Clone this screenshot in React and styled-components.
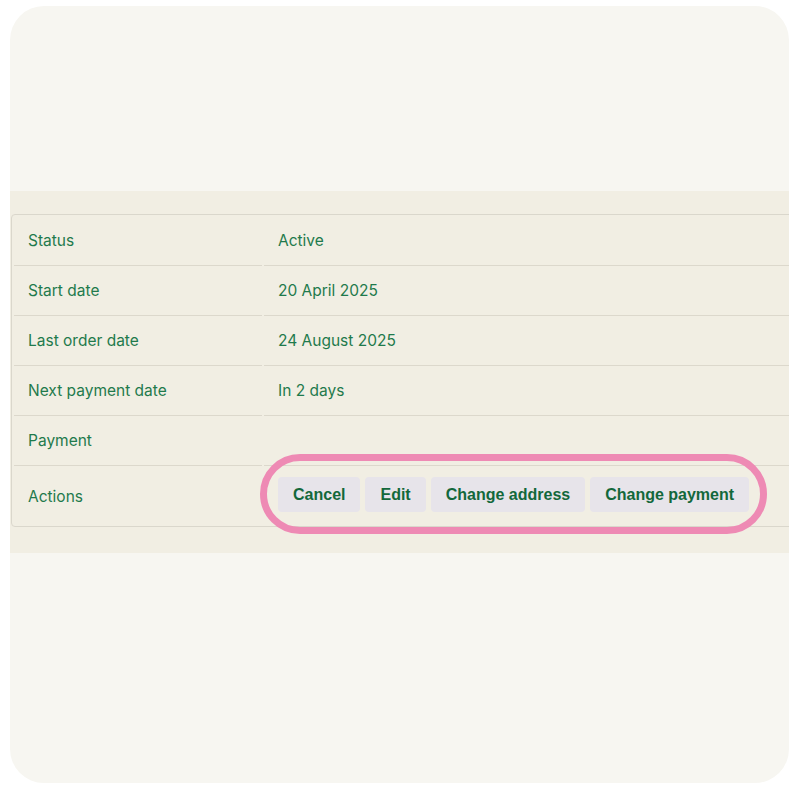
import styled, { createGlobalStyle } from "styled-components";

const GlobalStyle = createGlobalStyle`
    body {
        margin: 0;
        background: #ffffff;
        font-family: Inter, "Noto Sans", sans-serif;
    }
`;

const Page = styled.div`
    padding: 6px 11px 17px 10px;
`;

const Card = styled.div`
    background: #f7f6f1;
    border-radius: 34px;
    height: 777px;
    overflow: hidden;
    padding-top: 185px;
    box-sizing: border-box;
`;

const Band = styled.section`
    background: #f1eee3;
    padding: 23px 0 26px 1px;
`;

const Table = styled.table`
    border: 1px solid #dad7cc;
    border-radius: 4px;
    border-collapse: separate;
    border-spacing: 2px 0;
    width: 800px;
    color: #1f7a4c;
    font-size: 15.5px;
`;

const Row = styled.tr`
    height: ${({ tall }) => (tall ? "60px" : "50px")};

    &:first-child {
        height: 51px;
    }
`;

const Cell = styled.td`
    border-bottom: ${({ last }) => (last ? "none" : "1px solid #dcd8cc")};
    padding: 0 0 0 ${({ label }) => (label ? "14px" : "14px")};
    width: ${({ label }) => (label ? "234px" : "auto")};
    vertical-align: middle;
    position: relative;
`;

const Actions = styled.div`
    display: flex;
    gap: 5px;
    padding-bottom: 3px;
`;

const ActionButton = styled.button`
    background: #e7e4ea;
    border: none;
    border-radius: 4px;
    color: #13683b;
    font-family: "Liberation Sans", Arial, sans-serif;
    font-size: 16px;
    font-weight: 700;
    height: 35px;
    padding: 0 15px;
`;

const Highlight = styled.div`
    position: absolute;
    left: -4px;
    top: -12px;
    width: 507px;
    height: 80px;
    box-sizing: border-box;
    border: 7px solid #ee8ab4;
    border-radius: 40px;
    pointer-events: none;
`;

const details = [
    ["Status", "Active"],
    ["Start date", "20 April 2025"],
    ["Last order date", "24 August 2025"],
    ["Next payment date", "In 2 days"],
    ["Payment", ""],
];

const actions = ["Cancel", "Edit", "Change address", "Change payment"];

export default function App() {
    return (
        <>
            <GlobalStyle />
            <Page>
                <Card>
                    <Band>
                        <Table>
                            <tbody>
                                {details.map(([label, value]) => (
                                    <Row key={label}>
                                        <Cell label>{label}</Cell>
                                        <Cell>{value}</Cell>
                                    </Row>
                                ))}
                                <Row tall>
                                    <Cell label last>Actions</Cell>
                                    <Cell last>
                                        <Actions>
                                            {actions.map((a) => (
                                                <ActionButton key={a}>{a}</ActionButton>
                                            ))}
                                        </Actions>
                                        <Highlight />
                                    </Cell>
                                </Row>
                            </tbody>
                        </Table>
                    </Band>
                </Card>
            </Page>
        </>
    );
}
